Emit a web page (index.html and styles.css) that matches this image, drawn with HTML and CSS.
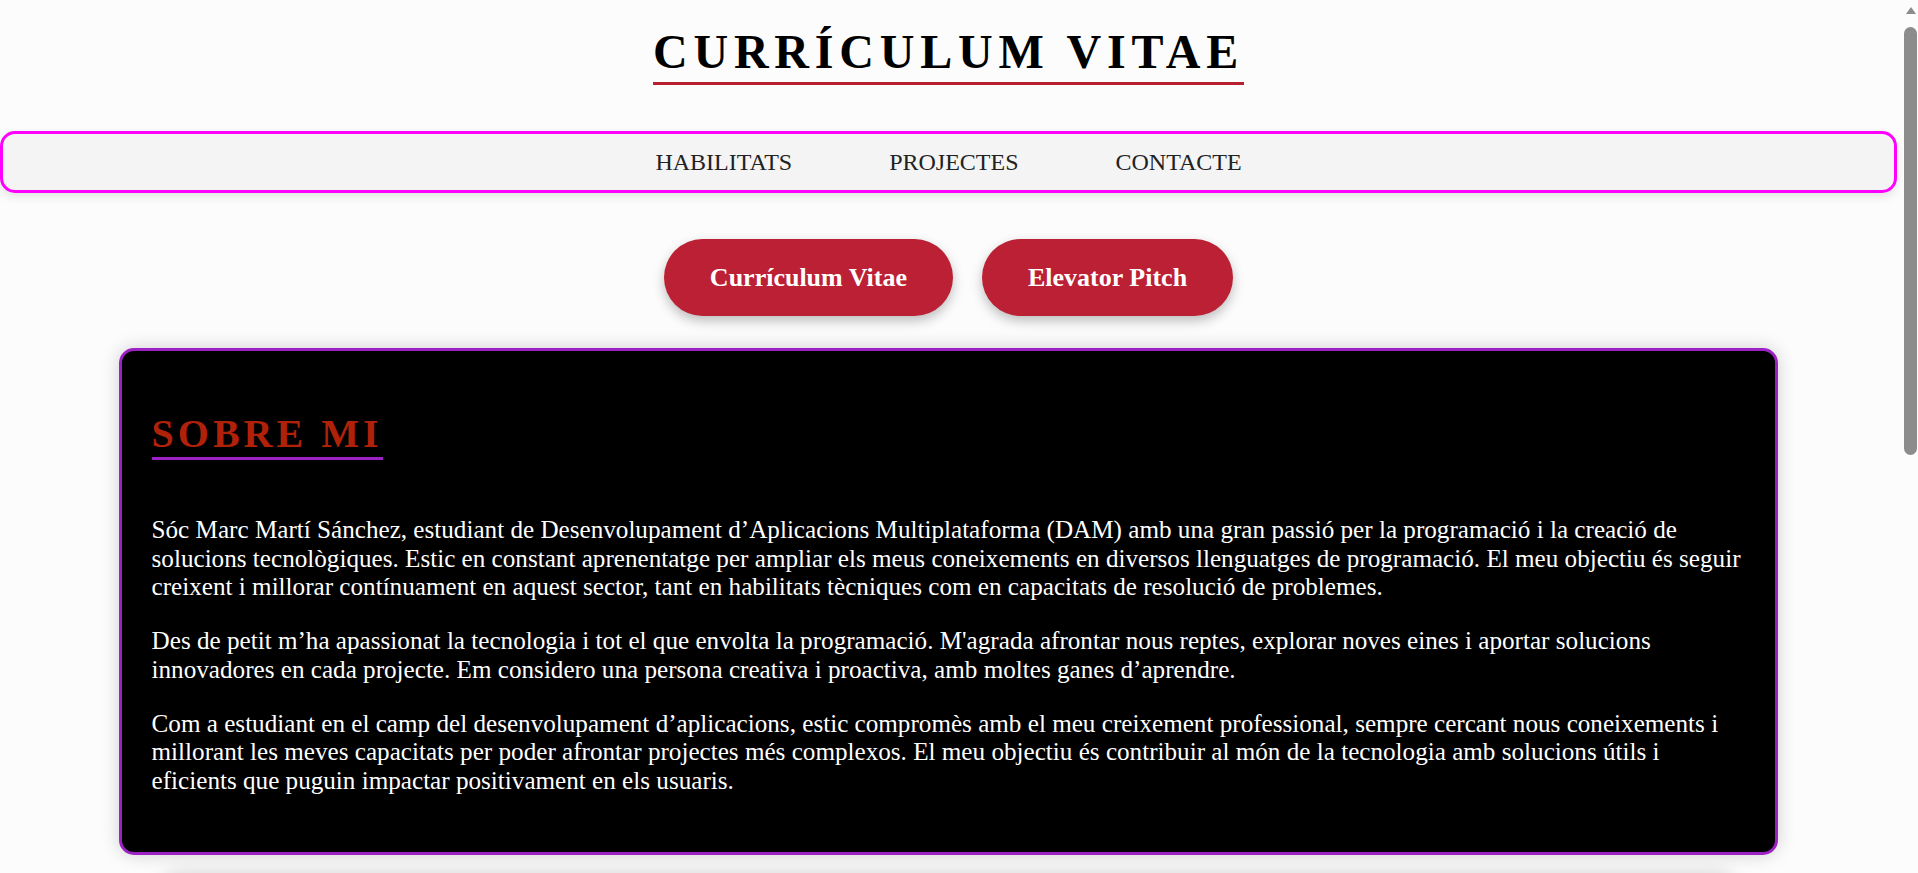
FILE: index.html
```html
<!DOCTYPE html>
<html lang="ca">
<head>
<meta charset="utf-8">
<title>Currículum Vitae</title>
<link rel="stylesheet" href="styles.css">
</head>
<body>
<div class="page">
  <header class="header">
    <h1 class="title">CURRÍCULUM VITAE</h1>
  </header>
  <nav class="nav">
    <a class="nav-link" href="#habilitats">HABILITATS</a>
    <a class="nav-link" href="#projectes">PROJECTES</a>
    <a class="nav-link" href="#contacte">CONTACTE</a>
  </nav>
  <div class="actions">
    <a class="btn" href="#cv">Currículum Vitae</a>
    <a class="btn" href="#pitch">Elevator Pitch</a>
  </div>
  <section class="card">
    <h2 class="card-title">SOBRE MI</h2>
    <p>Sóc Marc Martí Sánchez, estudiant de Desenvolupament d’Aplicacions Multiplataforma (DAM) amb una gran passió per la programació i la creació de solucions tecnològiques. Estic en constant aprenentatge per ampliar els meus coneixements en diversos llenguatges de programació. El meu objectiu és seguir creixent i millorar contínuament en aquest sector, tant en habilitats tècniques com en capacitats de resolució de problemes.</p>
    <p>Des de petit m’ha apassionat la tecnologia i tot el que envolta la programació. M'agrada afrontar nous reptes, explorar noves eines i aportar solucions innovadores en cada projecte. Em considero una persona creativa i proactiva, amb moltes ganes d’aprendre.</p>
    <p>Com a estudiant en el camp del desenvolupament d’aplicacions, estic compromès amb el meu creixement professional, sempre cercant nous coneixements i millorant les meves capacitats per poder afrontar projectes més complexos. El meu objectiu és contribuir al món de la tecnologia amb solucions útils i eficients que puguin impactar positivament en els usuaris.</p>
  </section>
  <section class="card card-narrow" id="habilitats">
    <h2 class="card-title">HABILITATS</h2>
    <p>Java, Kotlin, Python, SQL, HTML, CSS i JavaScript.</p>
  </section>
</div>
<div class="scrollbar" aria-hidden="true">
  <div class="scroll-arrow"></div>
  <div class="scroll-thumb"></div>
</div>
</body>
</html>
```
FILE: styles.css
```css
html, body {
  margin: 0;
  padding: 0;
}
body {
  background: #fcfcfc;
  font-family: "Liberation Serif", "Times New Roman", serif;
  color: #000;
}
.page {
  padding-right: 21px;
  padding-bottom: 40px;
  min-height: 1711px;
  box-sizing: border-box;
}
.header {
  text-align: center;
  padding-top: 24px;
}
.title {
  display: inline-block;
  margin: 0;
  font-size: 48px;
  font-weight: bold;
  letter-spacing: 5.8px;
  padding-bottom: 3px;
  border-bottom: 3px solid #b8202f;
  color: #000;
}
.nav {
  margin-top: 46px;
  display: flex;
  justify-content: center;
  gap: 97px;
  padding: 14.5px 0;
  background: #f4f4f4;
  border: 3px solid #ff00ff;
  border-radius: 15px;
  box-shadow: 0 4px 10px rgba(0, 0, 0, 0.1);
}
.nav-link {
  font-size: 24px;
  color: #222;
  text-decoration: none;
}
.actions {
  display: flex;
  justify-content: center;
  gap: 29px;
  margin-top: 46px;
}
.btn {
  display: block;
  padding: 23.5px 46px;
  background: #bc2034;
  color: #fff;
  font-size: 26px;
  font-weight: bold;
  text-decoration: none;
  border-radius: 40px;
  box-shadow: 0 5px 12px rgba(0, 0, 0, 0.25);
}
.card {
  width: 87.5%;
  box-sizing: border-box;
  margin: 32px auto 0;
  padding: 60px 30px 31px;
  background: #000;
  color: #fff;
  border: 3px solid #9d22c4;
  border-radius: 15px;
  box-shadow: 0 0 18px rgba(0, 0, 0, 0.18);
}
.card-narrow {
  width: 82.9%;
  margin-top: 19px;
}
.card-title {
  width: fit-content;
  margin: 0 0 56px;
  font-size: 40px;
  font-weight: bold;
  letter-spacing: 4px;
  color: #b0210a;
  border-bottom: 3px solid #9d22c4;
  line-height: 1.15;
}
.card p {
  margin: 0 0 25px;
  font-size: 25.15px;
  line-height: 28.7px;
}
.scrollbar {
  position: fixed;
  top: 0;
  right: 0;
  width: 15px;
  height: 100%;
  background: #fcfcfc;
  display: flex;
  flex-direction: column;
  align-items: center;
}
.scroll-arrow {
  margin-top: 7px;
  width: 0;
  height: 0;
  border-left: 5px solid transparent;
  border-right: 5px solid transparent;
  border-bottom: 7px solid #8c8c8c;
}
.scroll-thumb {
  margin-top: 13px;
  width: 13px;
  height: 428px;
  border-radius: 7px;
  background: #8c8c8c;
}
```
